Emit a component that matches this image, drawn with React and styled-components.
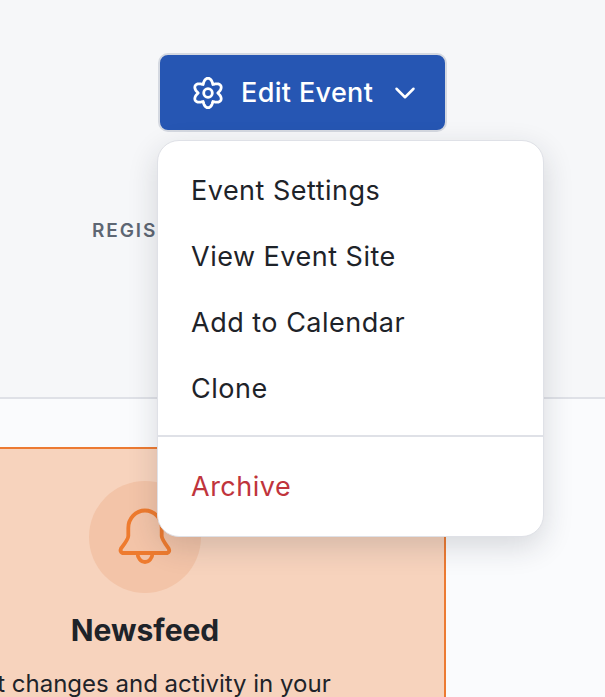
import styled, { createGlobalStyle } from "styled-components";
import { LuChevronDown } from "react-icons/lu";

const GlobalStyle = createGlobalStyle`
    html, body {
        margin: 0;
        padding: 0;
        height: 100%;
        overflow: hidden;
        background-color: #FAFBFD;
    }
    * {
        box-sizing: border-box;
    }
    body {
        font-family: Inter, "Liberation Sans", sans-serif;
    }
`;

const menuItems = ["Event Settings", "View Event Site", "Add to Calendar", "Clone"];

// six rounded lobes, one pointing straight up
const gearPoints = Array.from({ length: 120 }, (_, i) => {
    const angle = (i / 120) * Math.PI * 2;
    const wave = (Math.cos(6 * angle) + 1) / 2;
    const radius = 9.8 + 4.9 * Math.pow(wave, 0.6);
    return `${(17 + radius * Math.sin(angle)).toFixed(2)},${(17 - radius * Math.cos(angle)).toFixed(2)}`;
}).join(" ");

function GearIcon() {
    return (
        <svg width="34" height="34" viewBox="0 0 34 34" fill="none" stroke="currentColor" strokeWidth="2.8" strokeLinejoin="round">
            <polygon points={gearPoints} />
            <circle cx="17" cy="17" r="4.3" />
        </svg>
    );
}

function BellIcon() {
    return (
        <svg width="56" height="60" viewBox="-1 1 56 60" fill="none" stroke="currentColor" strokeWidth="3.8" strokeLinejoin="round">
            <path d="M10.3 22a16.7 17.5 0 0 1 33.4 0V30c0 3 3 7 7 12.5q1.5 3-1.5 4.5H4.5q-3-1.5-1.5-4.5C7.3 37 10.3 33 10.3 30Z" />
            <path d="M19.5 47a7.5 9 0 0 0 15 0" />
        </svg>
    );
}

export default function App() {
    return (
        <>
            <GlobalStyle />
            <PAGE>
                <HEADER>
                    <DROPDOWN>
                        <BUTTON>
                            <GearIcon />
                            <span>Edit Event</span>
                            <CHEVRON size={34} strokeWidth={1.75} />
                        </BUTTON>
                        <MENU>
                            {menuItems.map((item) => (
                                <ITEM key={item}>{item}</ITEM>
                            ))}
                            <DIVIDER />
                            <ITEM $danger>Archive</ITEM>
                        </MENU>
                    </DROPDOWN>
                    <STAT>REGISTRATIONS</STAT>
                </HEADER>
                <CONTENT>
                    <CARD>
                        <ICONCIRCLE>
                            <BellIcon />
                        </ICONCIRCLE>
                        <TITLE>Newsfeed</TITLE>
                        <DESCRIPTION>Get changes and activity in your event</DESCRIPTION>
                    </CARD>
                </CONTENT>
            </PAGE>
        </>
    );
}

const PAGE = styled.div`
    width: 605px;
    height: 697px;
    overflow: hidden;
`;
const HEADER = styled.header`
    height: 399px;
    padding: 53px 0 0 92px;
    background-color: #F6F7F9;
    border-bottom: 2px solid #DFE1E7;
`;
const DROPDOWN = styled.div`
    position: relative;
    width: 289px;
    margin-left: 66px;
    z-index: 2;
`;
const BUTTON = styled.button`
    display: flex;
    align-items: center;
    gap: 16px;
    width: 289px;
    height: 79px;
    padding: 0 0 0 31px;
    background-color: #2656B3;
    border: 2px solid #D5D9E1;
    border-radius: 10px;
    color: #FFFFFF;
    font-family: inherit;
    font-size: 27px;
    font-weight: 500;
    letter-spacing: 0.35px;
`;
const CHEVRON = styled(LuChevronDown)`
    margin-left: -1px;
`;
const MENU = styled.div`
    position: absolute;
    top: 87px;
    left: -1px;
    width: 387px;
    padding: 16px 0 17px;
    background-color: #FFFFFF;
    border: 1px solid #DFE1E7;
    border-radius: 22px;
    box-shadow: 0 10px 30px rgba(30, 35, 50, 0.16);
`;
const ITEM = styled.div`
    display: flex;
    align-items: center;
    height: 66px;
    padding: 0 33px;
    font-size: 27px;
    letter-spacing: 0.5px;
    color: ${(props) => (props.$danger ? "#C0343C" : "#1E2329")};
`;
const DIVIDER = styled.div`
    height: 2px;
    margin: 14px 0 16px;
    background-color: #DFE1E7;
`;
const STAT = styled.p`
    margin: 87px 0 0;
    font-size: 19px;
    font-weight: 600;
    letter-spacing: 1.9px;
    color: #5D6673;
`;
const CONTENT = styled.main`
    padding-top: 48px;
`;
const CARD = styled.section`
    display: flex;
    flex-direction: column;
    align-items: center;
    width: 602px;
    height: 320px;
    margin-left: -156px;
    padding-top: 32px;
    background-color: #F7D3BD;
    border: 2px solid #EC7A32;
`;
const ICONCIRCLE = styled.div`
    display: flex;
    align-items: center;
    justify-content: center;
    width: 112px;
    height: 112px;
    border-radius: 50%;
    background-color: #F3C4A8;
    color: #EE7B2F;
`;
const TITLE = styled.h2`
    margin: 19px 0 0;
    font-size: 30px;
    font-weight: 700;
    color: #1E2329;
`;
const DESCRIPTION = styled.p`
    width: 420px;
    margin: 19px 0 0 6px;
    font-size: 24px;
    line-height: 34px;
    text-align: center;
    color: #1E2329;
`;
